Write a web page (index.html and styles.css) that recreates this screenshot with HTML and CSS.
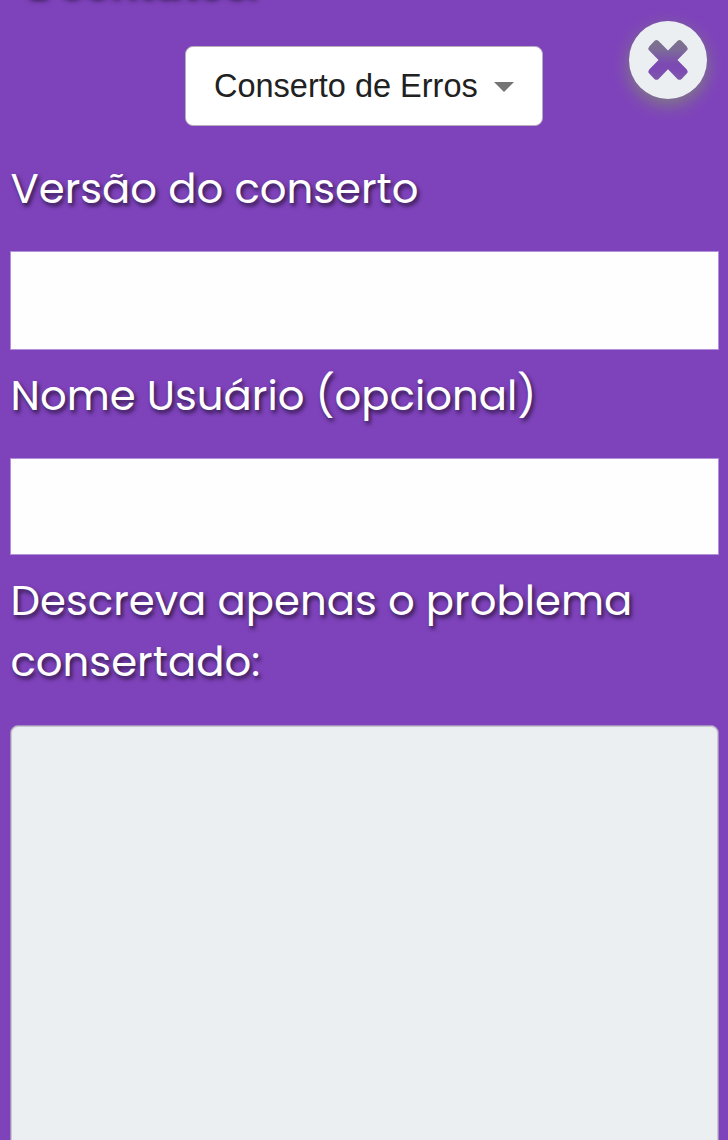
FILE: index.html
```html
<!DOCTYPE html>
<html lang="pt-BR">
<head>
<meta charset="utf-8">
<title>Conserto de Erros</title>
<link rel="stylesheet" href="styles.css">
</head>
<body>
<h2 class="heading">E contatos:</h2>
<button class="close" aria-label="Fechar">
<svg viewBox="0 0 78 78" width="78" height="78">
<defs><linearGradient id="fade" gradientUnits="userSpaceOnUse" x1="0" y1="19" x2="0" y2="59"><stop offset="0" stop-color="#7c758a"/><stop offset=".25" stop-color="#7c6b98"/><stop offset=".6" stop-color="#7c4ab3"/><stop offset=".75" stop-color="#7d4ab4"/><stop offset="1" stop-color="#7d58a8"/></linearGradient></defs>
<path fill="url(#fade)" d="M25.4 20Q27.5 18.2 29.6 20L39 29.5 48.4 20Q50.5 18.2 52.6 20L57.8 25.5Q59.5 27.5 57.8 29.5L48.5 39 57.8 48.4Q59.5 50.5 57.8 52.5L52.6 57.9Q50.5 59.8 48.4 57.9L39 48.3 29.6 57.9Q27.5 59.8 25.4 57.9L20.2 52.5Q18.5 50.5 20.2 48.4L29.5 39 20.2 29.5Q18.5 27.5 20.2 25.5Z"/>
</svg>
</button>
<form class="form">
<button type="button" class="select"><span>Conserto de Erros</span><i class="arrow"></i></button>
<label class="label version" for="version">Versão do conserto</label>
<input class="field" id="version">
<label class="label name" for="name">Nome Usuário (opcional)</label>
<input class="field second" id="name">
<label class="label problem" for="problem">Descreva apenas o problema consertado:</label>
<textarea class="area" id="problem"></textarea>
</form>
</body>
</html>
```
FILE: styles.css
```css
* { box-sizing: border-box; }
body { position: relative; margin: 0; height: 1140px; overflow: hidden; background: #7e42bb; }
.heading { position: absolute; left: 25px; top: -46px; margin: 0; font: 600 41.4px/50px Poppins, Inter, sans-serif; color: #fff; text-shadow: 3px 6px 6px #000; white-space: nowrap; }
.close { position: absolute; left: 629px; top: 21px; width: 78px; height: 78px; padding: 0; border: 0; border-radius: 50%; background: #ebeff2; box-shadow: 0 6px 18px #808080; }
.close svg { display: block; }
.form { display: flex; flex-direction: column; padding: 46px 9px 0 10px; }
.select { align-self: center; display: flex; align-items: center; gap: 16px; width: 358px; height: 80px; margin-right: 1px; padding: 0 0 0 28px; border: 1px solid #b7adbe; border-radius: 8px; background: #fff; color: #212121; font: 32.5px "Liberation Sans", Arial, sans-serif; white-space: nowrap; }
.arrow { margin-top: 2px; border: 10px solid transparent; border-top-color: #757575; border-bottom: 0; }
.label { display: block; padding-left: .5px; font: 41.8px/61px Poppins, Inter, sans-serif; color: #fff; text-shadow: 2px 3px 4px rgba(0,0,0,.65); }
.version { margin: 32px 0; }
.name { margin: 15px 0 32px; }
.problem { margin: 15px 0 33px; }
.field { display: block; width: 100%; height: 99px; border: 1px solid #b48fd9; border-radius: 0; background: #fefefe; }
.second { height: 97px; }
.area { display: block; width: 100%; height: 440px; resize: none; border: 1px solid #a48abf; border-radius: 8px; background: #ebeff2; box-shadow: inset 0 0 0 1px #c9c8d0; }
```
